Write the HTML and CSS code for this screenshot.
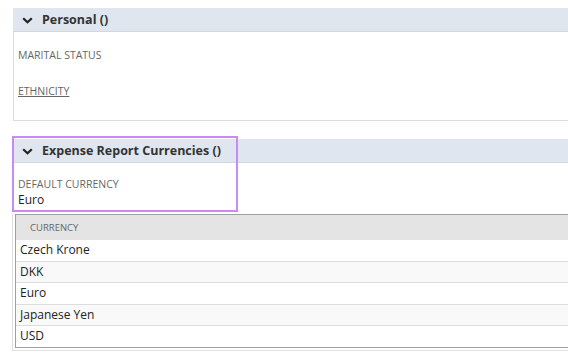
FILE: index.html
```html
<!DOCTYPE html>
<html>
<head>
<meta charset="utf-8">
<link rel="stylesheet" href="styles.css">
</head>
<body>
<div class="page">
  <section class="section s1">
    <div class="sec-head">
      <svg class="chev" width="11" height="7" viewBox="0 0 11 7"><polyline points="1.2,1.2 5.5,5.3 9.8,1.2" fill="none" stroke="#222" stroke-width="2.2"/></svg>
      <span class="sec-title">Personal ()</span>
    </div>
    <div class="sec-body">
      <div class="field">
        <div class="label">MARITAL STATUS</div>
        <div class="value"></div>
      </div>
      <div class="field">
        <div class="label"><span class="link">ETHNICITY</span></div>
        <div class="value"></div>
      </div>
    </div>
  </section>

  <section class="section s2">
    <div class="sec-head">
      <svg class="chev" width="11" height="7" viewBox="0 0 11 7"><polyline points="1.2,1.2 5.5,5.3 9.8,1.2" fill="none" stroke="#222" stroke-width="2.2"/></svg>
      <span class="sec-title">Expense Report Currencies ()</span>
    </div>
    <div class="sec-body2">
      <div class="field f2">
        <div class="label">DEFAULT CURRENCY</div>
        <div class="value">Euro</div>
      </div>
      <div class="grid-wrap">
        <div class="grid">
          <div class="grid-head">CURRENCY</div>
          <div class="row">Czech Krone</div>
          <div class="row alt">DKK</div>
          <div class="row">Euro</div>
          <div class="row alt">Japanese Yen</div>
          <div class="row last">USD</div>
        </div>
      </div>
    </div>
    <div class="highlight"></div>
  </section>
</div>
</body>
</html>
```

FILE: styles.css
```css
html, body {
  margin: 0;
  padding: 0;
  background: #fff;
  overflow: hidden;
}
body {
  font-family: "Open Sans", "Liberation Sans", sans-serif;
  color: #333;
}
.page {
  padding: 8px 0 0 13px;
}
.section {
  position: relative;
}
.s2 {
  margin-top: 18px;
}
.sec-head {
  height: 23px;
  background: #dfe6ef;
  border-bottom: 1px solid #d3d7dc;
  display: flex;
  align-items: center;
  padding-left: 9px;
}
.chev {
  display: block;
  margin-right: 9px;
  margin-top: 1px;
}
.sec-title {
  font-weight: 700;
  font-size: 12.5px;
  color: #333;
}
.sec-body {
  border-left: 1px solid #dcdcdc;
  border-bottom: 1px solid #dcdcdc;
  padding: 12px 0 4px 4px;
}
.field {
  padding-top: 4px;
}
.label {
  font-size: 10.5px;
  line-height: 14px;
  color: #666;
}
.link {
  text-decoration: underline;
}
.value {
  min-height: 18px;
  font-size: 12px;
  line-height: 17px;
  color: #222;
}
.sec-body2 {
  padding: 10px 0 0 0;
}
.f2 {
  padding-left: 5px;
}
.f2 .value {
  min-height: 17px;
}
.grid-wrap {
  margin-top: 6px;
  margin-left: -1px;
  border: 1px solid #dedede;
  border-top: none;
  border-right: none;
  padding: 0 0 2px 2px;
}
.grid {
  border: 1px solid #a0a0a0;
  border-right: none;
}
.grid-head {
  height: 25px;
  line-height: 25px;
  background: #e4e4e4;
  font-size: 9.5px;
  color: #666;
  padding-left: 14px;
}
.row {
  font-size: 12px;
  line-height: 20.5px;
  padding-left: 4px;
  border-top: 1px solid #dcdcdc;
  color: #222;
  background: #fff;
}
.row.alt {
  background: #f9f9f9;
}
.grid-head + .row {
  border-top: none;
}
.highlight {
  position: absolute;
  left: -1px;
  top: -3px;
  width: 222px;
  height: 72px;
  border: 2px solid #c98af8;
  pointer-events: none;
}
```
